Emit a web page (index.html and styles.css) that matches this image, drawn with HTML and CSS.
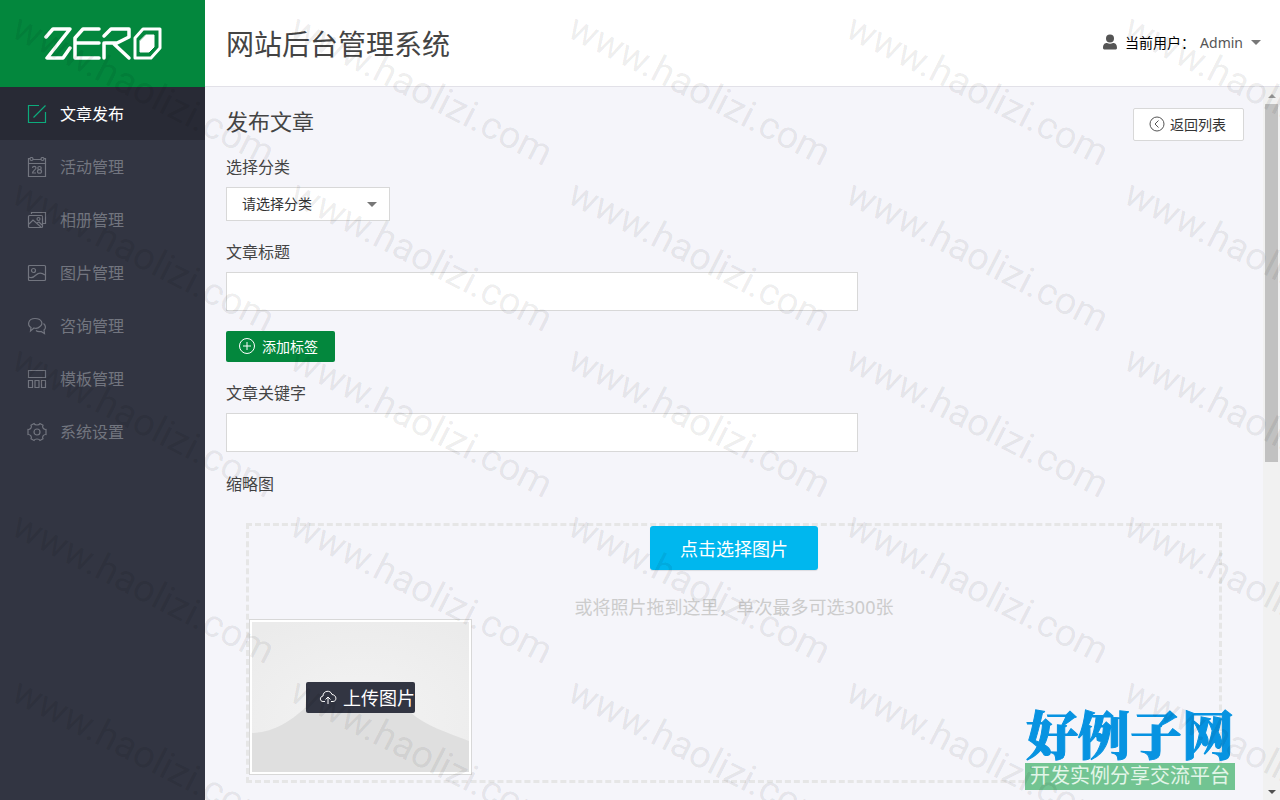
FILE: index.html
```html
<!DOCTYPE html>
<html lang="zh-CN">
<head>
<meta charset="utf-8">
<title>网站后台管理系统</title>
<link rel="stylesheet" href="styles.css">
</head>
<body>
<div class="app">
  <aside class="sidebar">
    <a class="logo" href="#" aria-label="ZERO">
      <svg width="118" height="34" viewBox="0 0 118 34" fill="none" stroke="#fff" stroke-width="3.500" stroke-linecap="round" stroke-linejoin="round">
        <path d="M2 10l7-8h17L3 31h16l7-10"/>
        <path d="M55 2H39l-8 9v20h24M31 16h24"/>
        <path d="M60 31V16M61 16h12l12-6V2H67l-7 7M70 17l15 14"/>
        <path d="M99 2h17v19l-9 10H91V11z" stroke-width="3"/>
        <path d="M102 8h8v12l-5 5H96V14z" fill="#fff" stroke-width="1"/>
      </svg>
    </a>
    <nav class="menu">
      <a class="menu-item active" href="#">
        <svg class="icon" viewBox="0 0 20 20"><path d="M12 1.500H1.500v17h17V8M6.500 13.500l12-12"/></svg>
        文章发布</a>
      <a class="menu-item" href="#">
        <svg class="icon" viewBox="0 0 20 20"><path d="M3 1.500H1.500v18h17v-18H17M6 2.500h8M1.500 6.500h17"/><circle cx="4.500" cy="2" r="1.500"/><circle cx="15.500" cy="2" r="1.500"/><path d="M5.500 11c0-2.200 3.500-2.200 3.500 0 0 1.500-3.500 3-3.500 5H9"/><ellipse cx="12.500" cy="11" rx="1.700" ry="1.500"/><ellipse cx="12.500" cy="14.400" rx="2" ry="1.800"/></svg>
        活动管理</a>
      <a class="menu-item" href="#">
        <svg class="icon" viewBox="0 0 20 20"><path d="M4.500 4V2.500h14v11H16"/><rect x="1.500" y="5.500" width="14" height="12" rx="1"/><circle cx="11.500" cy="9" r="1.500"/><path d="M2 14l4-4 8 7M10 13l2-1 3 3"/></svg>
        相册管理</a>
      <a class="menu-item" href="#">
        <svg class="icon" viewBox="0 0 20 20"><rect x="1.500" y="2.500" width="17" height="15" rx="1"/><circle cx="6.500" cy="7.500" r="2"/><path d="M2 14c3 2 5 0 7-2s5-3 9 0"/></svg>
        图片管理</a>
      <a class="menu-item" href="#">
        <svg class="icon" viewBox="0 0 20 20"><path d="M3.500 15l.5-3.500C0 9 1 2.500 8 2.500s8.500 5.500 5 8c-2 2-4.500 2-6 1.500zM16.500 7.500c2.500 2 2.500 5 .5 6.500l.5 3.500-3.500-2c-2.500.5-4 0-5-1"/></svg>
        咨询管理</a>
      <a class="menu-item" href="#">
        <svg class="icon" viewBox="0 0 20 20"><path d="M1.500 1.500h17v7h-17zM1.500 11.500h4v7h-4zM8 11.500h4v7H8zM14.500 11.500h4v7h-4z"/></svg>
        模板管理</a>
      <a class="menu-item" href="#">
        <svg class="icon" viewBox="0 0 20 20"><path d="M7 1.500c.8 2 5.200 2 6 0l3 1.700c-1.200 2 .5 4.500 3 4.300v5c-2.500-.2-4.200 2.300-3 4.300l-3 1.700c-.8-2-5.200-2-6 0l-3-1.700c1.200-2-.5-4.500-3-4.300v-5c2.500.2 4.200-2.300 3-4.300z"/><circle cx="10" cy="10" r="3"/></svg>
        系统设置</a>
    </nav>
  </aside>

  <div class="page">
    <header class="topbar">
      <h1 class="site-title">网站后台管理系统</h1>
      <div class="user">
        <svg width="16" height="16" viewBox="0 0 16 16" fill="#555"><circle cx="8" cy="4.500" r="4"/><path d="M1 14c0-4 2-5 4-5 2 1 4 1 6 0 2 0 4 1 4 5 0 1-1 1.500-2 1.500H3C2 15.500 1 15 1 14z"/></svg>
        <span class="user-label">当前用户：</span>
        <a class="user-name" href="#">Admin<i class="caret"></i></a>
      </div>
    </header>

    <div class="body">
      <main class="content">
        <div class="heading">
          <h2 class="page-title">发布文章</h2>
          <a class="back" href="#">
            <svg width="16" height="16" viewBox="0 0 16 16" fill="none" stroke="#555"><circle cx="8" cy="8" r="7"/><path d="M9.500 4.500L6 8l3.500 3.500"/></svg>
            返回列表</a>
        </div>

        <form class="form">
          <label class="label" for="category">选择分类</label>
          <div class="select-wrap">
            <select class="select" id="category"><option>请选择分类</option></select>
            <i class="caret"></i>
          </div>

          <label class="label" for="title">文章标题</label>
          <input class="text" id="title" type="text">
          <button class="add" type="button">
            <svg width="18" height="18" viewBox="0 0 18 18" fill="none" stroke="#fff"><circle cx="9" cy="9" r="7.500"/><path d="M9 5v8M5 9h8"/></svg>
            添加标签</button>

          <label class="label" for="keywords">文章关键字</label>
          <input class="text" id="keywords" type="text">

          <div class="label">缩略图</div>
          <div class="dropzone">
            <button class="pick" type="button">点击选择图片</button>
            <p class="hint">或将照片拖到这里，单次最多可选300张</p>
            <div class="thumb">
              <svg class="thumb-bg" viewBox="0 0 217 150" preserveAspectRatio="none">
                <defs><radialGradient id="sky" cx="50%" cy="65%" r="75%"><stop offset="0" stop-color="#f3f3f3"/><stop offset="1" stop-color="#ebebeb"/></radialGradient></defs>
                <path fill="url(#sky)" d="M0 0h217v150H0z"/>
                <path fill="#dfdfdf" d="M0 111c23-1 38-12 52-24 18-16 36-26 56-26 18 0 34 14 50 29 16 14 36 20 59 29v31H0z"/>
              </svg>
              <button class="upload" type="button">
                <svg width="18" height="16" viewBox="0 0 18 16" fill="none" stroke="#fff"><path d="M6 12.500H4C.5 12.500.5 7.500 4 7 4 1.500 11.500.5 13 5.500c5 .5 5 7 1 7h-2M9 15V8M6.500 10.500L9 8l2.500 2.500"/></svg>
                上传图片</button>
            </div>
          </div>
        </form>
      </main>
      <div class="scrollbar" aria-hidden="true">
        <i class="arrow up"></i>
        <i class="track"><i class="thumb-bar"></i></i>
        <i class="arrow down"></i>
      </div>
    </div>
  </div>

  <div class="brand">
    <strong class="brand-name">好例子网</strong>
    <span class="brand-line">开发实例分享交流平台</span>
  </div>

  <div class="watermark" aria-hidden="true">
    <span>www.haolizi.com</span><span>www.haolizi.com</span><span>www.haolizi.com</span><span>www.haolizi.com</span><span>www.haolizi.com</span>
    <span>www.haolizi.com</span><span>www.haolizi.com</span><span>www.haolizi.com</span><span>www.haolizi.com</span><span>www.haolizi.com</span>
    <span>www.haolizi.com</span><span>www.haolizi.com</span><span>www.haolizi.com</span><span>www.haolizi.com</span><span>www.haolizi.com</span>
    <span>www.haolizi.com</span><span>www.haolizi.com</span><span>www.haolizi.com</span><span>www.haolizi.com</span><span>www.haolizi.com</span>
    <span>www.haolizi.com</span><span>www.haolizi.com</span><span>www.haolizi.com</span><span>www.haolizi.com</span><span>www.haolizi.com</span>
  </div>
</div>
</body>
</html>
```
FILE: styles.css
```css
* { box-sizing: border-box; }
body {
  margin: 0;
  font-family: "Noto Sans", "Noto Sans CJK SC", sans-serif;
  font-size: 14px;
  color: #444;
}
a { color: inherit; text-decoration: none; }
button, input, select { font: inherit; }
svg { flex: none; }

.app {
  position: relative;
  display: flex;
  height: 100vh;
  overflow: hidden;
  background: #f5f5fa;
}

.sidebar { flex: none; width: 205px; background: #323542; }
.logo {
  display: flex;
  align-items: center;
  justify-content: center;
  height: 87px;
  background: #03873d;
}
.menu-item {
  display: flex;
  align-items: center;
  gap: 13px;
  height: 53px;
  padding-left: 27px;
  font-size: 16px;
  line-height: 24px;
  color: #72757f;
}
.menu-item.active { background: #282a35; color: #fff; }
.icon { width: 20px; height: 20px; fill: none; stroke: currentColor; stroke-width: 1.2; }
.active .icon { stroke: #0cab7c; }

.page { flex: 1; display: flex; flex-direction: column; min-width: 0; }
.topbar {
  flex: none;
  display: flex;
  align-items: center;
  justify-content: space-between;
  height: 87px;
  padding: 0 19px 0 21px;
  background: #fff;
  border-bottom: 1px solid #e2e1e8;
}
.site-title { margin: 0; font-size: 28px; font-weight: 400; }
.user { display: flex; align-items: center; padding-bottom: 2px; }
.user-label { margin-left: 7px; color: #000; }
.user-name { display: flex; align-items: center; gap: 8px; margin-left: 5px; color: #555; }
.caret {
  border: 5px solid transparent;
  border-top-color: #777;
  border-bottom: 0;
}

.body { flex: 1; display: flex; min-height: 0; }
.content { flex: 1; min-width: 0; padding: 17px 19px 0 21px; overflow: hidden; }
.heading { display: flex; justify-content: space-between; }
.page-title { margin: 0; font-size: 22px; line-height: 34px; font-weight: 400; }
.back {
  display: flex;
  align-items: center;
  gap: 5px;
  height: 33px;
  margin-top: 4px;
  padding: 0 17px 1px 15px;
  color: #333;
  background: #fff;
  border: 1px solid #d8d8d8;
  border-radius: 2px;
}

.form { display: flex; flex-direction: column; align-items: flex-start; }
.label { font-size: 16px; line-height: 24px; }
.heading + .form { margin-top: 14px; }
.select-wrap { position: relative; width: 164px; margin: 8px 0 19px; }
.select {
  display: block;
  width: 100%;
  height: 34px;
  padding: 0 15px 2px;
  color: #333;
  background: #fff;
  border: 1px solid #d8d8d8;
  border-radius: 0;
  appearance: none;
}
.select-wrap .caret { position: absolute; right: 13px; top: 15px; }
.text {
  width: 632px;
  max-width: 100%;
  height: 39px;
  margin: 8px 0 20px;
  padding: 0 10px;
  background: #fff;
  border: 1px solid #d8d8d8;
}
.add {
  display: flex;
  align-items: center;
  gap: 6px;
  height: 31px;
  margin-bottom: 19px;
  padding: 0 17px 1px 12px;
  color: #fff;
  background: #03873d;
  border: 0;
  border-radius: 2px;
}

.dropzone {
  align-self: stretch;
  display: flex;
  flex-direction: column;
  align-items: center;
  margin: 27px 22px 0 20px;
  padding-bottom: 5px;
  border: 3px dashed #e6e6e6;
}
.pick {
  height: 44px;
  padding: 0 30px 1px;
  font-size: 18px;
  color: #fff;
  background: #00b7ee;
  border: 0;
  border-radius: 3px;
  box-shadow: 0 1px 1px rgba(0, 0, 0, .1);
}
.hint { margin: 25px 0 0; font-size: 18px; line-height: 24px; color: #ccc; }
.thumb {
  align-self: flex-start;
  display: grid;
  place-items: center;
  width: 223px;
  height: 156px;
  padding: 2px;
  background: #fff;
  border: 1px solid #d8d8d8;
}
.thumb-bg { grid-area: 1 / 1; width: 100%; height: 100%; }
.upload {
  grid-area: 1 / 1;
  display: flex;
  align-items: center;
  gap: 6px;
  height: 31px;
  padding: 0 0 1px 13px;
  font-size: 18px;
  color: #fff;
  background: #323542;
  border: 0;
  border-radius: 2px;
}

.scrollbar { flex: none; display: flex; flex-direction: column; width: 17px; background: #f1f1f1; }
.arrow { display: grid; place-items: center; height: 17px; }
.arrow::before { content: ""; border: 4px solid transparent; }
.up::before { border-top: 0; border-bottom-color: #999; }
.down::before { border-bottom: 0; border-top-color: #505050; }
.track { flex: 1; padding: 0 2px; }
.thumb-bar { display: block; height: 358px; background: #c1c1c1; }

.brand {
  position: absolute;
  right: 45px;
  bottom: 10px;
  display: flex;
  flex-direction: column;
  align-items: center;
  width: 210px;
}
.brand-name {
  padding-bottom: 2px;
  font-family: "Noto Serif CJK SC", "Noto Sans CJK SC", serif;
  font-size: 52px;
  line-height: 56px;
  font-weight: 900;
  white-space: nowrap;
  color: #0793e1;
  -webkit-text-stroke: 1px #0793e1;
}
.brand-line {
  width: 100%;
  height: 27px;
  font-size: 20px;
  line-height: 26px;
  text-align: center;
  white-space: nowrap;
  color: #e2f5e8;
  background: #72c492;
}

.watermark {
  position: absolute;
  inset: 0;
  display: grid;
  grid-template-columns: repeat(5, 278px);
  grid-auto-rows: 166px;
  padding: 3px 0 0 10px;
  overflow: hidden;
  pointer-events: none;
  font-family: Roboto, sans-serif;
  font-size: 38px;
  line-height: 40px;
  color: rgba(0, 0, 0, .08);
}
.watermark span { transform: rotate(27deg); transform-origin: 0 32px; white-space: nowrap; }
```
